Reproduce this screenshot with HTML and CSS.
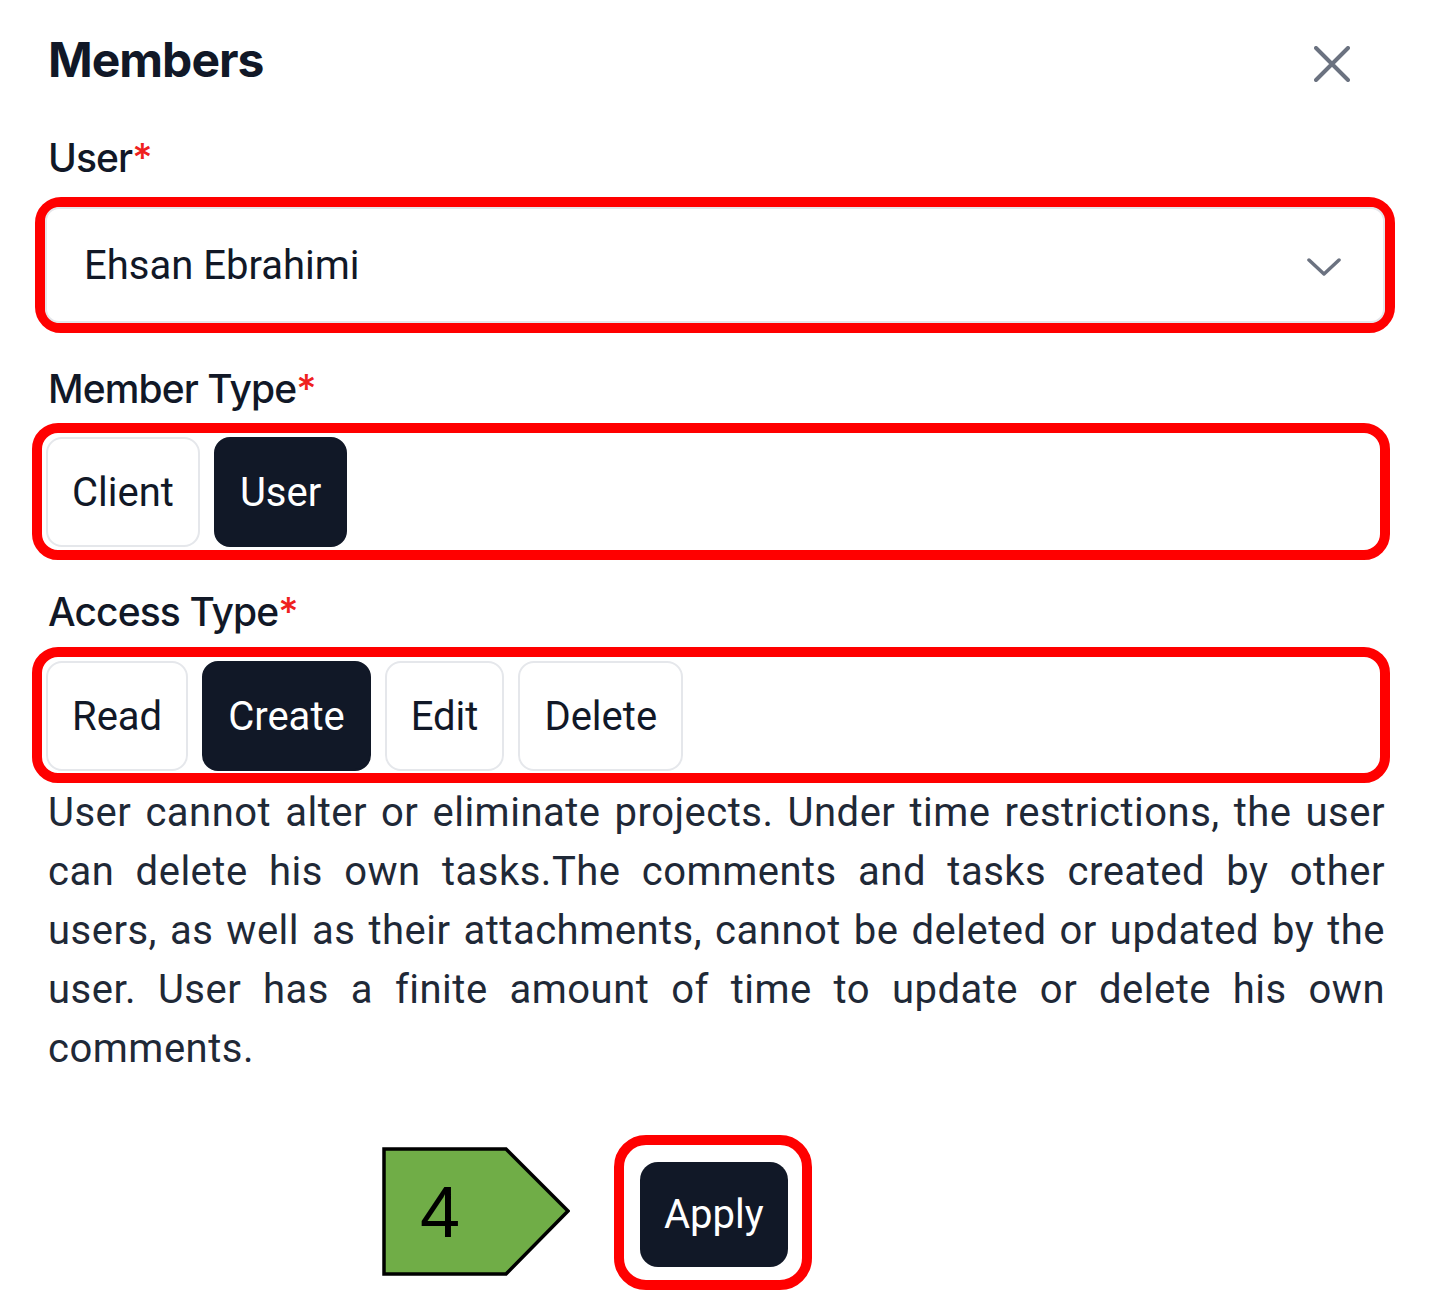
FILE: index.html
```html
<!DOCTYPE html>
<html lang="en">
<head>
<meta charset="utf-8">
<title>Members</title>
<link rel="stylesheet" href="styles.css">
</head>
<body>
<div class="panel">
  <header class="head">
    <h1 class="title">Members</h1>
    <button class="close" aria-label="Close">
      <svg width="36" height="36" viewBox="0 0 36 36"><path d="M2 2 L34 34 M34 2 L2 34" stroke="#6b7280" stroke-width="4" stroke-linecap="round" fill="none"/></svg>
    </button>
  </header>

  <label class="label label-user">User<span class="req">*</span></label>
  <div class="mark mark-select">
    <div class="select">
      <span class="select-value">Ehsan Ebrahimi</span>
      <svg class="chev" width="34" height="18" viewBox="0 0 34 18"><path d="M2 2 L17 16 L32 2" stroke="#6b7280" stroke-width="3.5" stroke-linecap="round" stroke-linejoin="round" fill="none"/></svg>
    </div>
  </div>

  <label class="label label-member">Member Type<span class="req">*</span></label>
  <div class="mark mark-seg">
    <div class="seg">
      <span class="opt">Client</span>
      <span class="opt on">User</span>
    </div>
  </div>

  <label class="label label-access">Access Type<span class="req">*</span></label>
  <div class="mark mark-seg mark-access">
    <div class="seg">
      <span class="opt">Read</span>
      <span class="opt on">Create</span>
      <span class="opt">Edit</span>
      <span class="opt">Delete</span>
    </div>
  </div>

  <p class="desc">User cannot alter or eliminate projects. Under time restrictions, the user can delete his own tasks.The comments and tasks created by other users, as well as their attachments, cannot be deleted or updated by the user. User has a finite amount of time to update or delete his own comments.</p>

  <div class="actions">
    <svg class="step" width="188" height="130" viewBox="0 0 188 130">
      <polygon points="2,2 124,2 186,64 124,127 2,127" fill="#70ad47" stroke="#000" stroke-width="3.5" stroke-linejoin="miter"/>
      <text x="38" y="90" class="step-num">4</text>
    </svg>
    <div class="mark mark-apply">
      <button class="apply">Apply</button>
    </div>
  </div>
</div>
</body>
</html>
```

FILE: styles.css
```css
* { box-sizing: border-box; }
html, body { margin: 0; padding: 0; background: #fff; }
body { font-family: Roboto, "Liberation Sans", sans-serif; color: #111827; }

.panel {
  width: 1445px;
  padding: 30px 60px 0 48px;
}

.head {
  display: flex;
  justify-content: space-between;
  align-items: flex-start;
  height: 60px;
}
.title {
  margin: 0;
  font-family: Inter, "Liberation Sans", sans-serif;
  font-weight: 700;
  font-size: 48px;
  line-height: 60px;
  letter-spacing: -1px;
  color: #111827;
}
.close {
  border: 0;
  background: none;
  padding: 0;
  margin: 16px 35px 0 0;
  width: 36px;
  height: 36px;
  display: flex;
}

.label {
  display: block;
  font-family: Inter, "Liberation Sans", sans-serif;
  font-weight: 500;
  font-size: 39px;
  line-height: 48px;
  letter-spacing: -0.9px;
  color: #111827;
}
.req { color: #ef2020; }
.label-user { margin-top: 44px; }
.label-member { margin-top: 32px; }
.label-access { margin-top: 28px; }

.mark {
  border: 10px solid #ff0000;
  border-radius: 26px;
}
.mark-select {
  margin: 15px -10px 0 -13px;
  height: 136px;
}
.mark-seg {
  margin: 10px -5px 0 -16px;
  height: 137px;
  padding: 4px 0 0 4px;
}
.mark-access {
  margin-top: 11px;
  height: 136px;
}

.select {
  height: 116px;
  border: 2px solid #e5e7eb;
  border-radius: 14px;
  display: flex;
  align-items: center;
  justify-content: space-between;
  padding: 0 42px 0 37px;
}
.select-value {
  font-size: 40px;
  color: #111827;
}
.chev { display: block; margin-top: 4px; }

.seg {
  display: flex;
  gap: 14px;
}
.opt {
  height: 110px;
  display: inline-flex;
  align-items: center;
  padding: 0 24px;
  border: 2px solid #e5e7eb;
  border-radius: 16px;
  font-size: 40px;
  color: #111827;
  background: #fff;
}
.opt.on {
  background: #111827;
  border-color: #111827;
  color: #fff;
}

.desc {
  margin: 0;
  font-size: 40px;
  line-height: 59px;
  letter-spacing: 0.5px;
  text-align: justify;
  color: #1f2937;
  width: 1337px;
}

.actions {
  display: flex;
  align-items: center;
  gap: 47px;
  margin-top: 57px;
  padding-left: 334px;
}
.step { display: block; margin-top: -2px; }
.step-num {
  font-family: "Liberation Sans", Arial, sans-serif;
  font-size: 72px;
  fill: #000;
}
.mark-apply {
  margin-left: -3px;
  border-radius: 32px;
  padding: 17px 14px 13px 16px;
}
.apply {
  display: block;
  border: 0;
  background: #111827;
  color: #fff;
  font-family: Roboto, "Liberation Sans", sans-serif;
  font-size: 40px;
  height: 105px;
  padding: 0 24px;
  border-radius: 18px;
}
```
